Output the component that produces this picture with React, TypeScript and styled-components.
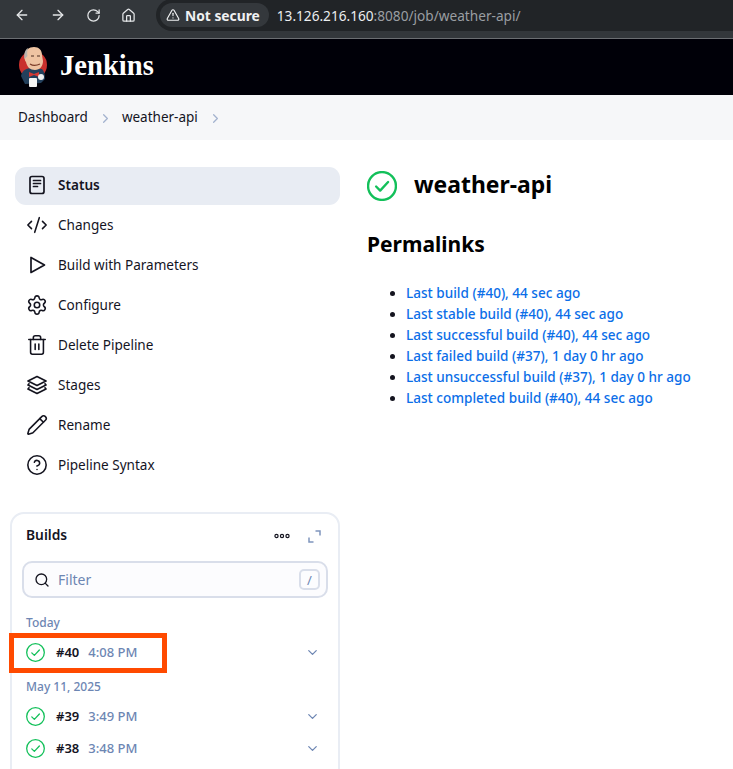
import React from 'react';
import styled, { createGlobalStyle } from 'styled-components';
import {
  ArrowLeft,
  ArrowRight,
  RotateCw,
  House,
  TriangleAlert,
  CodeXml,
  Settings,
  Trash2,
  Pencil,
  CircleHelp,
  Search,
  ChevronDown,
  ChevronRight,
} from 'lucide-react';

const GlobalStyle = createGlobalStyle`
  html, body {
    margin: 0;
    height: 100%;
    background: #fff;
    overflow: hidden;
  }
  body {
    font-family: "Noto Sans", "Open Sans", sans-serif;
    color: #14141f;
  }
`;

const BrowserBar = styled.div`
  height: 38px;
  background: #33373b;
  border-bottom: 1px solid #6b6e72;
  display: flex;
  align-items: center;
  color: #e4e6e8;
  overflow: hidden;
`;

const NavIcons = styled.div`
  display: flex;
  align-items: center;
  gap: 20px;
  padding: 0 20px 0 14px;
  margin-top: -8px;
`;

const AddressBar = styled.div`
  flex: 1;
  height: 32px;
  margin-top: -8px;
  margin-right: -20px;
  padding: 0 0 0 4px;
  background: #212427;
  border-radius: 16px;
  display: flex;
  align-items: center;
  gap: 8px;
  box-sizing: border-box;
`;

const SecureChip = styled.div`
  height: 24px;
  padding: 0 9px 0 6px;
  background: #34383c;
  border-radius: 12px;
  display: flex;
  align-items: center;
  gap: 5px;
  font-size: 13.8px;
  font-weight: 700;
  color: #f0f1f2;
  white-space: nowrap;
`;

const Url = styled.div`
  font-size: 13.65px;
  color: #9a9ea2;
  white-space: nowrap;
  b {
    font-weight: 400;
    color: #eceef0;
  }
`;

const Header = styled.header`
  height: 56px;
  background: #000008;
  display: flex;
  align-items: center;
  padding-left: 18px;
  gap: 8px;
`;

const Brand = styled.div`
  font-family: "Liberation Serif", serif;
  font-weight: 700;
  font-size: 28.6px;
  line-height: 32px;
  padding-bottom: 2px;
  color: #fff;
  margin-left: 2px;
`;

const Breadcrumbs = styled.nav`
  height: 45px;
  background: #f6f7f9;
  display: flex;
  align-items: center;
  padding-left: 18px;
  font-size: 13.5px;
  color: #14141f;
  svg {
    color: #a3b3cf;
    margin: 1px 9px 0 10px;
  }
`;

const CrumbLabel = styled.span`
  padding-bottom: 1px;
`;

const Main = styled.main`
  display: grid;
  grid-template-columns: 367px 1fr;
`;

const Sidebar = styled.aside`
  padding: 27px 0 0 10px;
`;

const Tasks = styled.div`
  display: flex;
  flex-direction: column;
  gap: 2px;
  margin: 0 -1px 0 5px;
  width: 325px;
`;

const Task = styled.div<{ $active?: boolean }>`
  height: 38px;
  box-sizing: border-box;
  display: flex;
  align-items: center;
  gap: 10px;
  padding-left: 11px;
  border-radius: 11px;
  font-size: 13.55px;
  font-weight: ${(p) => (p.$active ? 600 : 400)};
  background: ${(p) => (p.$active ? '#e8ecf3' : 'transparent')};
  color: #14141f;
  svg {
    flex: none;
    margin-bottom: 2px;
  }
`;

const TaskLabel = styled.span`
  padding-bottom: 2px;
`;

const BuildsCard = styled.section`
  width: 330px;
  height: 300px;
  box-sizing: border-box;
  margin-top: 27px;
  border: 2px solid #e9edf4;
  border-radius: 14px;
  padding: 10px 10px 0;
`;

const CardHead = styled.div`
  display: flex;
  align-items: center;
  justify-content: space-between;
  height: 24px;
  padding: 0 7px 0 4px;
  font-size: 13.8px;
  font-weight: 600;
`;

const CardTitle = styled.span`
  padding-bottom: 4px;
`;

const CardActions = styled.div`
  display: flex;
  align-items: center;
  gap: 18px;
  svg {
    display: block;
  }
`;

const FilterBox = styled.div`
  margin-top: 13px;
  height: 37px;
  box-sizing: border-box;
  border: 2px solid #d9deea;
  border-radius: 10px;
  background: #fcfcfe;
  display: flex;
  align-items: center;
  padding: 0 6px 0 10px;
  gap: 8px;
  font-size: 14px;
  color: #6d86b3;
`;

const FilterText = styled.span`
  flex: 1;
`;

const KeyHint = styled.kbd`
  width: 21px;
  height: 21px;
  box-sizing: border-box;
  border: 2px solid #d9deea;
  border-radius: 5px;
  display: flex;
  align-items: center;
  justify-content: center;
  font: 400 13px "Noto Sans", sans-serif;
  color: #6d86b3;
`;

const DayLabel = styled.div<{ $first?: boolean }>`
  height: 18px;
  line-height: 18px;
  margin: ${(p) => (p.$first ? '16px' : '10px')} 0 4px 4px;
  font-size: 12px;
  font-weight: 500;
  color: #6d86b3;
`;

const BuildRow = styled.div`
  position: relative;
  height: 32px;
  display: flex;
  align-items: center;
  padding: 0 8px 0 4px;
  font-size: 13px;
`;

const BuildNumber = styled.span`
  margin-left: 11px;
  font-weight: 600;
  color: #14141f;
`;

const BuildTime = styled.span`
  margin-left: 9px;
  flex: 1;
  font-weight: 500;
  color: #6d86b3;
`;

const Highlight = styled.div`
  position: absolute;
  left: -13px;
  top: -3px;
  width: 158px;
  height: 40px;
  box-sizing: border-box;
  border: 5px solid #ff4a00;
`;

const Content = styled.div`
  padding-top: 29px;
`;

const TitleRow = styled.div`
  display: flex;
  align-items: center;
  gap: 17px;
  height: 34px;
`;

const Title = styled.h1`
  margin: 0;
  padding-bottom: 4px;
  font-size: 22.9px;
  font-weight: 700;
  color: #000;
`;

const SectionTitle = styled.h2`
  margin: 26px 0 0;
  height: 30px;
  line-height: 30px;
  font-size: 21px;
  font-weight: 700;
  color: #000;
`;

const Links = styled.ul`
  margin: 24px 0 0;
  padding: 0 0 0 39px;
  font-size: 13.55px;
  line-height: 21px;
  li::marker {
    color: #14141f;
  }
`;

const PermaLink = styled.a`
  color: #0b6ee8;
  font-weight: 500;
  text-decoration: none;
  white-space: nowrap;
`;

function CheckCircle({ size, width }: { size: number; width: number }) {
  return (
    <svg width={size} height={size} viewBox="0 0 28 28" fill="none" style={{ flex: 'none' }}>
      <circle cx="14" cy="14" r="13" stroke="#13c05a" strokeWidth={width} />
      <path d="M8.5 14.5l3.8 3.8 7.4-8" stroke="#13c05a" strokeWidth={width} strokeLinecap="round" strokeLinejoin="round" />
    </svg>
  );
}

function JenkinsLogo() {
  return (
    <svg width="32" height="42" viewBox="0 0 32 42" style={{ flex: 'none' }}>
      <circle cx="15" cy="19" r="14" fill="#c9302c" />
      <path d="M3 30c1-6 6-8 11-8l10 1c2 2 3 5 3 10l-4 4-16 1z" fill="#23405c" />
      <path d="M7 10c0-6 4-9 9-9s8 3 8 8l1 6c0 5-3 9-8 9-5 0-8-3-9-8-1-1-2-4-1-6z" fill="#eec3a2" />
      <path d="M6.500 13c-1-5 .5-9 3.500-11-1 3-1 6-.5 8-1 1-2 2-3 3z" fill="#b9b4ae" />
      <path d="M13 10h3M19 10h3" stroke="#4a2d20" strokeWidth="1" />
      <path d="M12 18c3 2 6 2 10 0" stroke="#7a3b28" strokeWidth="1.200" fill="none" />
      <path d="M11 26l5 2 5-2v5l-5-2-5 2z" fill="#d33833" />
      <rect x="11" y="32" width="8" height="9" rx="1" fill="#f4f4f4" />
      <circle cx="23" cy="31" r="3" fill="#eee" />
    </svg>
  );
}

type IconProps = { size?: number; strokeWidth?: number };

function StatusIcon({ size = 22, strokeWidth = 1.8 }: IconProps) {
  return (
    <svg width={size} height={size} viewBox="0 0 22 22" fill="none" stroke="currentColor" strokeWidth={strokeWidth} strokeLinecap="round">
      <rect x="4" y="2.500" width="14" height="17" rx="2" />
      <path d="M7.500 6.500h7M7.500 9.500h7M7.500 12.500h4" />
    </svg>
  );
}

function PlayIcon({ size = 22, strokeWidth = 1.6 }: IconProps) {
  return (
    <svg width={size} height={size} viewBox="0 0 22 22" fill="none" stroke="currentColor" strokeWidth={strokeWidth} strokeLinejoin="round">
      <path d="M5 3.500v15L18.500 11z" />
    </svg>
  );
}

function StagesIcon({ size = 22, strokeWidth = 1.6 }: IconProps) {
  return (
    <svg width={size} height={size} viewBox="0 0 22 22" fill="none" stroke="currentColor" strokeWidth={strokeWidth} strokeLinejoin="round" strokeLinecap="round">
      <path d="M11 2.500l9 4.500-9 4.500L2 7z" />
      <path d="M3 9.800L2 11l9 4.500 9-4.500-1-1.200" />
      <path d="M3 13.800L2 15l9 4.500 9-4.500-1-1.200" />
    </svg>
  );
}

const tasks = [
  { label: 'Status', icon: StatusIcon, active: true },
  { label: 'Changes', icon: CodeXml },
  { label: 'Build with Parameters', icon: PlayIcon },
  { label: 'Configure', icon: Settings },
  { label: 'Delete Pipeline', icon: Trash2 },
  { label: 'Stages', icon: StagesIcon },
  { label: 'Rename', icon: Pencil },
  { label: 'Pipeline Syntax', icon: CircleHelp },
];

const permalinks = [
  'Last build (#40), 44 sec ago',
  'Last stable build (#40), 44 sec ago',
  'Last successful build (#40), 44 sec ago',
  'Last failed build (#37), 1 day 0 hr ago',
  'Last unsuccessful build (#37), 1 day 0 hr ago',
  'Last completed build (#40), 44 sec ago',
];

function Build({ num, time, marked }: { num: string; time: string; marked?: boolean }) {
  return (
    <BuildRow>
      <CheckCircle size={19} width={1.9} />
      <BuildNumber>{num}</BuildNumber>
      <BuildTime>{time}</BuildTime>
      <ChevronDown size={15} color="#6d86b3" />
      {marked && <Highlight />}
    </BuildRow>
  );
}

export default function App() {
  return (
    <>
      <GlobalStyle />
      <BrowserBar>
        <NavIcons>
          <ArrowLeft size={16} />
          <ArrowRight size={16} />
          <RotateCw size={15} />
          <House size={15} />
        </NavIcons>
        <AddressBar>
          <SecureChip>
            <TriangleAlert size={14} />
            Not secure
          </SecureChip>
          <Url>
            <b>13.126.216.160</b>:8080/job/weather-api/
          </Url>
        </AddressBar>
      </BrowserBar>
      <Header>
        <JenkinsLogo />
        <Brand>Jenkins</Brand>
      </Header>
      <Breadcrumbs>
        <CrumbLabel>Dashboard</CrumbLabel>
        <ChevronRight size={15} />
        <CrumbLabel>weather-api</CrumbLabel>
        <ChevronRight size={15} />
      </Breadcrumbs>
      <Main>
        <Sidebar>
          <Tasks>
            {tasks.map(({ label, icon: Icon, active }) => (
              <Task key={label} $active={active}>
                <Icon size={22} strokeWidth={1.7} />
                <TaskLabel>{label}</TaskLabel>
              </Task>
            ))}
          </Tasks>
          <BuildsCard>
            <CardHead>
              <CardTitle>Builds</CardTitle>
              <CardActions>
                <svg width="16" height="6" viewBox="0 0 16 6" fill="none" stroke="#14141f" strokeWidth="1.200">
                  <circle cx="2.500" cy="3" r="1.600" />
                  <circle cx="8" cy="3" r="1.600" />
                  <circle cx="13.500" cy="3" r="1.600" />
                </svg>
                <svg width="13" height="13" viewBox="0 0 13 13" fill="none" stroke="#7f95bd" strokeWidth="1.500">
                  <path d="M7.500 1H12v4.500M5.500 12H1V7.500" />
                </svg>
              </CardActions>
            </CardHead>
            <FilterBox>
              <Search size={16} color="#14141f" />
              <FilterText>Filter</FilterText>
              <KeyHint>/</KeyHint>
            </FilterBox>
            <DayLabel $first>Today</DayLabel>
            <Build num="#40" time="4:08 PM" marked />
            <DayLabel>May 11, 2025</DayLabel>
            <Build num="#39" time="3:49 PM" />
            <Build num="#38" time="3:48 PM" />
          </BuildsCard>
        </Sidebar>
        <Content>
          <TitleRow>
            <CheckCircle size={30} width={2.2} />
            <Title>weather-api</Title>
          </TitleRow>
          <SectionTitle>Permalinks</SectionTitle>
          <Links>
            {permalinks.map((text) => (
              <li key={text}>
                <PermaLink href="#">{text}</PermaLink>
              </li>
            ))}
          </Links>
        </Content>
      </Main>
    </>
  );
}
